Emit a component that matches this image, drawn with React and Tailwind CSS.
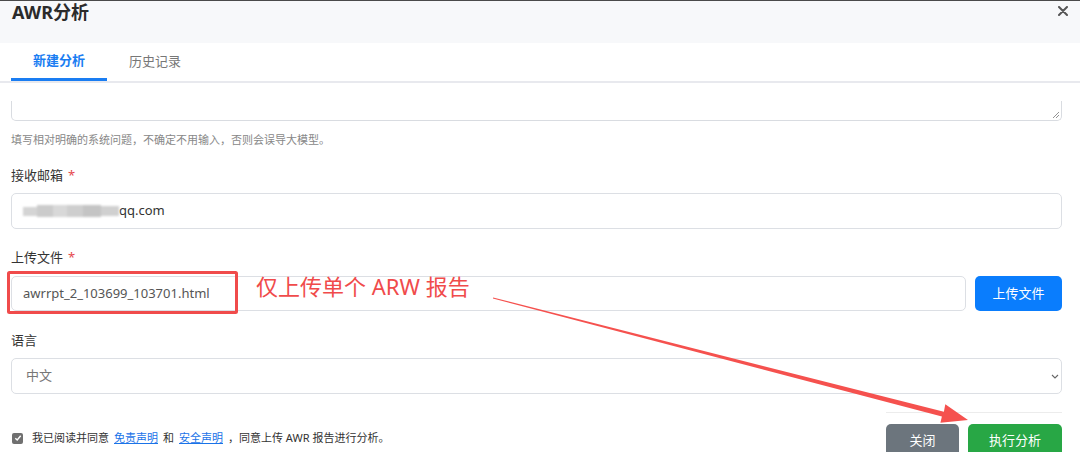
import React from "react";

const FONT = { fontFamily: '"Noto Sans", "Noto Sans CJK SC", sans-serif' };

function Label({ children, required }) {
  return (
    <div className="text-[13px] leading-[20px] text-[#333]">
      {children}
      {required && <span className="ml-[5px] text-[#e5484d]">*</span>}
    </div>
  );
}

export default function App() {
  return (
    <div className="relative w-[1080px] h-[452px] overflow-hidden bg-white border-t border-[#4a4a4a]" style={FONT}>
      {/* Header */}
      <div className="h-[42px] bg-[#f7f8fa] flex items-start justify-between pl-[12px] pr-[12px]">
        <div className="text-[18px] leading-[22px] font-bold text-[#2b2b2b]">AWR分析</div>
        <svg width="10" height="10" viewBox="0 0 10 10" className="mt-[5px]">
          <path d="M1 1 L9 9 M9 1 L1 9" stroke="#555" strokeWidth="2" strokeLinecap="round" />
        </svg>
      </div>

      {/* Tabs */}
      <div className="h-[40px] border-b-2 border-[#e8e9ee] flex px-[11px]">
        <div className="h-full flex items-center px-[22px] border-b-[3px] border-[#1a7df2] -mb-[2px] text-[13px] font-semibold text-[#1a7df2]">
          新建分析
        </div>
        <div className="h-full flex items-center px-[22px] text-[13px] text-[#777]">历史记录</div>
      </div>

      {/* Body */}
      <div className="pl-[11px] pr-[18px]">
        <div className="mt-[18px] h-[20px] border-x border-b border-[#d9dce1] rounded-b-[5px] relative">
          <svg width="8" height="8" viewBox="0 0 8 8" className="absolute right-[1px] bottom-[1px]">
            <path d="M7 1 L1 7 M7 4 L4 7" stroke="#888" strokeWidth="0.9" />
          </svg>
        </div>
        <div className="mt-[11px] text-[11px] leading-[16px] text-[#888]">
          填写相对明确的系统问题，不确定不用输入，否则会误导大模型。
        </div>

        <div className="mt-[17px]">
          <Label required>接收邮箱</Label>
        </div>
        <div className="mt-[8px] h-[36px] border border-[#dcdfe4] rounded-[5px] flex items-center pl-[11px] text-[13px] text-[#333]">
          <span className="flex items-center h-[12px] blur-[1.3px]">
            <span className="w-[14px] h-[9px] bg-[#d4d4d4]" />
            <span className="w-[16px] h-[12px] bg-[#cbcbcb]" />
            <span className="w-[14px] h-[12px] bg-[#d8d8d8]" />
            <span className="w-[16px] h-[12px] bg-[#cecece]" />
            <span className="w-[18px] h-[12px] bg-[#c4c4c4]" />
            <span className="w-[18px] h-[10px] bg-[#d0d0d0]" />
          </span>
          <span>qq.com</span>
        </div>

        <div className="mt-[18px]">
          <Label required>上传文件</Label>
        </div>
        <div className="mt-[9px] flex gap-[9px]">
          <div className="flex-1 h-[35px] border border-[#dcdfe4] rounded-[5px] flex items-center pl-[11px] text-[13px] text-[#555]">
            awrrpt_2_103699_103701.html
          </div>
          <div className="w-[87px] h-[35px] rounded-[5px] bg-[#0a7dfd] flex items-center justify-center text-[13px] text-white">
            上传文件
          </div>
        </div>

        <div className="mt-[19px]">
          <Label>语言</Label>
        </div>
        <div className="mt-[8px] h-[36px] border border-[#dcdfe4] rounded-[5px] flex items-center justify-between pl-[14px] pr-[2px] text-[13px] text-[#777]">
          <span>中文</span>
          <svg width="8" height="5" viewBox="0 0 8 5">
            <path d="M1 1 L4 4 L7 1" stroke="#666" strokeWidth="1.1" fill="none" />
          </svg>
        </div>

        {/* Footer */}
        <div className="flex justify-between items-start">
          <div className="mt-[36px] flex items-center text-[11px] text-[#333]">
            <span className="w-[11px] h-[11px] ml-[1px] rounded-[2px] bg-[#707070] flex items-center justify-center">
              <svg width="8" height="8" viewBox="0 0 8 8">
                <path d="M1.3 4.2 L3.2 6 L6.7 1.8" stroke="#fff" strokeWidth="1.4" fill="none" />
              </svg>
            </span>
            <span className="ml-[9px]">我已阅读并同意</span>
            <span className="ml-[5px] text-[#1a73e8] underline">免责声明</span>
            <span className="ml-[5px]">和</span>
            <span className="ml-[5px] text-[#1a73e8] underline">安全声明</span>
            <span className="ml-[5px]">，同意上传 AWR 报告进行分析。</span>
          </div>
          <div className="w-[176px] mt-[18px]">
            <div className="h-px bg-[#ececec]" />
            <div className="mt-[11px] flex gap-[9px]">
              <div className="w-[73px] h-[34px] rounded-[5px] bg-[#6c757d] flex items-center justify-center text-[13px] text-white">
                关闭
              </div>
              <div className="flex-1 h-[34px] rounded-[5px] bg-[#28a745] flex items-center justify-center text-[13px] text-white">
                执行分析
              </div>
            </div>
          </div>
        </div>
      </div>

      {/* Annotations */}
      <svg className="absolute left-0 top-0 pointer-events-none" width="1080" height="452" viewBox="0 -1 1080 452">
        <rect x="8.5" y="270.5" width="228" height="40" rx="1" fill="none" stroke="#f04b4b" strokeWidth="3" />
        <polygon
          points="493.1,295.5 943.9,409.8 945.3,402.3 968,418 940.4,420.7 941.9,414.6 492.9,296.5"
          fill="#f5514e"
        />
      </svg>
      <div className="absolute left-[256px] top-[271px] text-[22px] leading-[28px] text-[#f04b4b]">
        仅上传单个 ARW 报告
      </div>
    </div>
  );
}
